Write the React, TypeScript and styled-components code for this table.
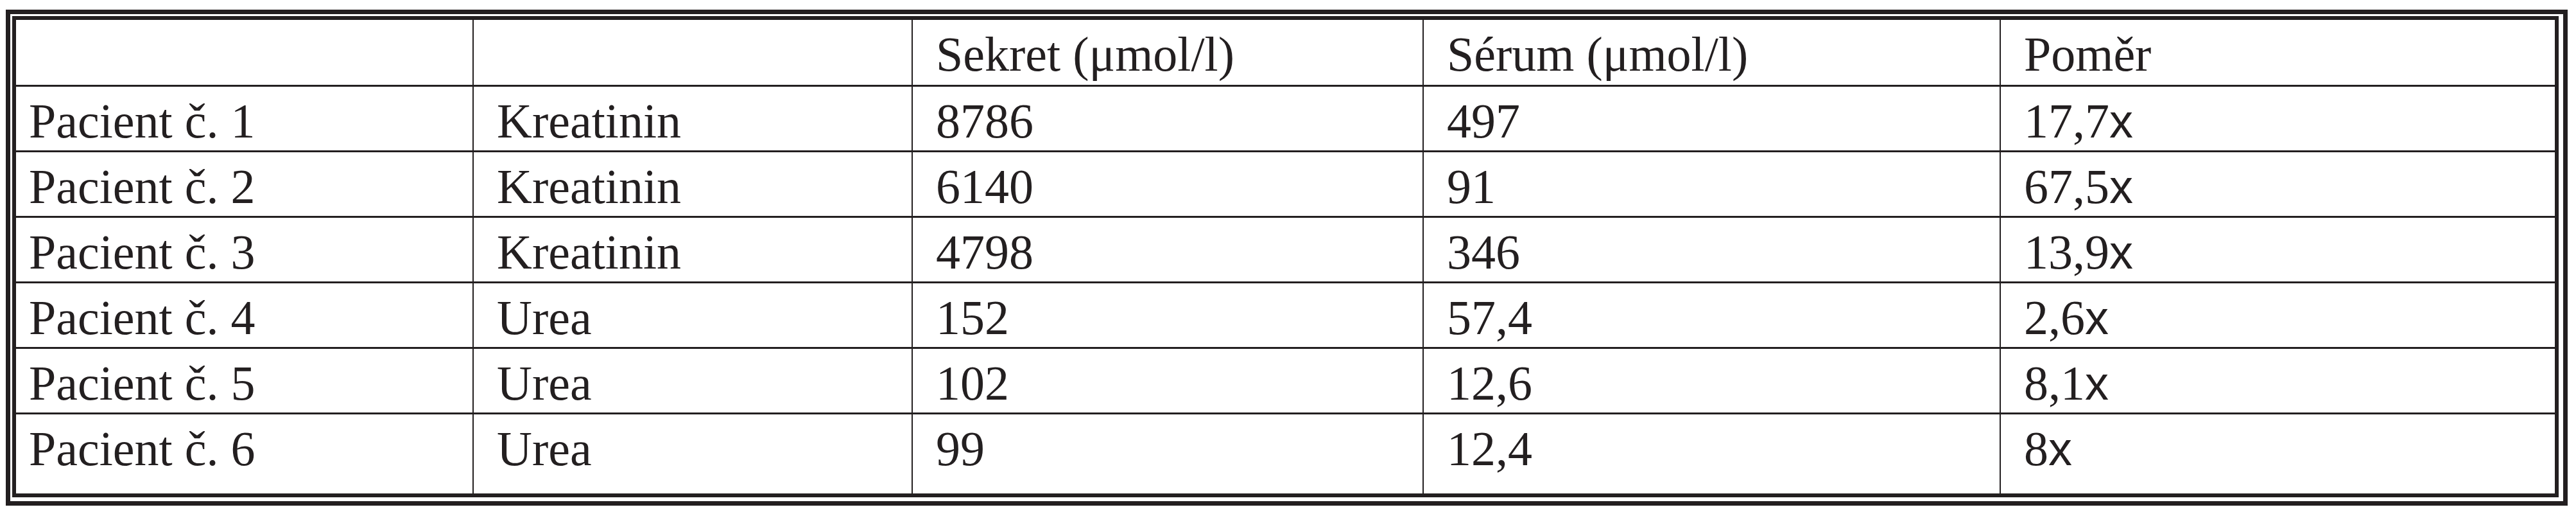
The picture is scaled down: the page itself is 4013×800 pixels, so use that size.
import React from "react";
import styled, { createGlobalStyle } from "styled-components";

const GlobalStyle = createGlobalStyle`
  html, body {
    margin: 0;
    padding: 0;
    background: #ffffff;
  }
  body {
    font-family: "Liberation Serif", "Times New Roman", serif;
    color: #231f20;
  }
`;

const Frame = styled.div`
  box-sizing: border-box;
  margin: 15px 0 0 9px;
  width: 3991px;
  border: 7px solid #231f20;
  padding: 3px 7px 6px 3px;
  background: #fff;
`;

const Inner = styled.div`
  border: 6px solid #231f20;
  background: #fff;
`;

const Grid = styled.div`
  display: grid;
  grid-template-columns: 711px 684px 796px 899px 866px;
  grid-template-rows: 101px repeat(5, 102px) 126px;
`;

const Cell = styled.div<{ $first?: boolean; $header?: boolean }>`
  box-sizing: border-box;
  border-left: ${(p) => (p.$first ? "none" : "2px solid #231f20")};
  border-top: ${(p) => (p.$header ? "none" : "3px solid #231f20")};
  padding: 10px 0 0 ${(p) => (p.$first ? "20px" : "36px")};
  font-size: 76px;
  line-height: 86px;
  white-space: nowrap;
  color: #231f20;
`;

const Times = styled.span`
  font-family: "Liberation Serif", "Times New Roman", serif;
`;

const X = styled.span`
  font-family: "Liberation Sans", Arial, sans-serif;
  font-size: 74px;
`;

type Row = {
  patient: string;
  substance: string;
  sekret: string;
  serum: string;
  ratio: string;
};

const rows: Row[] = [
  { patient: "Pacient č. 1", substance: "Kreatinin", sekret: "8786", serum: "497", ratio: "17,7" },
  { patient: "Pacient č. 2", substance: "Kreatinin", sekret: "6140", serum: "91", ratio: "67,5" },
  { patient: "Pacient č. 3", substance: "Kreatinin", sekret: "4798", serum: "346", ratio: "13,9" },
  { patient: "Pacient č. 4", substance: "Urea", sekret: "152", serum: "57,4", ratio: "2,6" },
  { patient: "Pacient č. 5", substance: "Urea", sekret: "102", serum: "12,6", ratio: "8,1" },
  { patient: "Pacient č. 6", substance: "Urea", sekret: "99", serum: "12,4", ratio: "8" },
];

export default function App() {
  return (
    <>
      <GlobalStyle />
      <Frame>
        <Inner>
          <Grid>
            <Cell $first $header />
            <Cell $header />
            <Cell $header>
              <Times>Sekret (μmol/l)</Times>
            </Cell>
            <Cell $header>
              <Times>Sérum (μmol/l)</Times>
            </Cell>
            <Cell $header>
              <Times>Poměr</Times>
            </Cell>
            {rows.map((r) => (
              <React.Fragment key={r.patient}>
                <Cell $first>{r.patient}</Cell>
                <Cell>{r.substance}</Cell>
                <Cell>{r.sekret}</Cell>
                <Cell>{r.serum}</Cell>
                <Cell>
                  {r.ratio}
                  <X>x</X>
                </Cell>
              </React.Fragment>
            ))}
          </Grid>
        </Inner>
      </Frame>
    </>
  );
}
